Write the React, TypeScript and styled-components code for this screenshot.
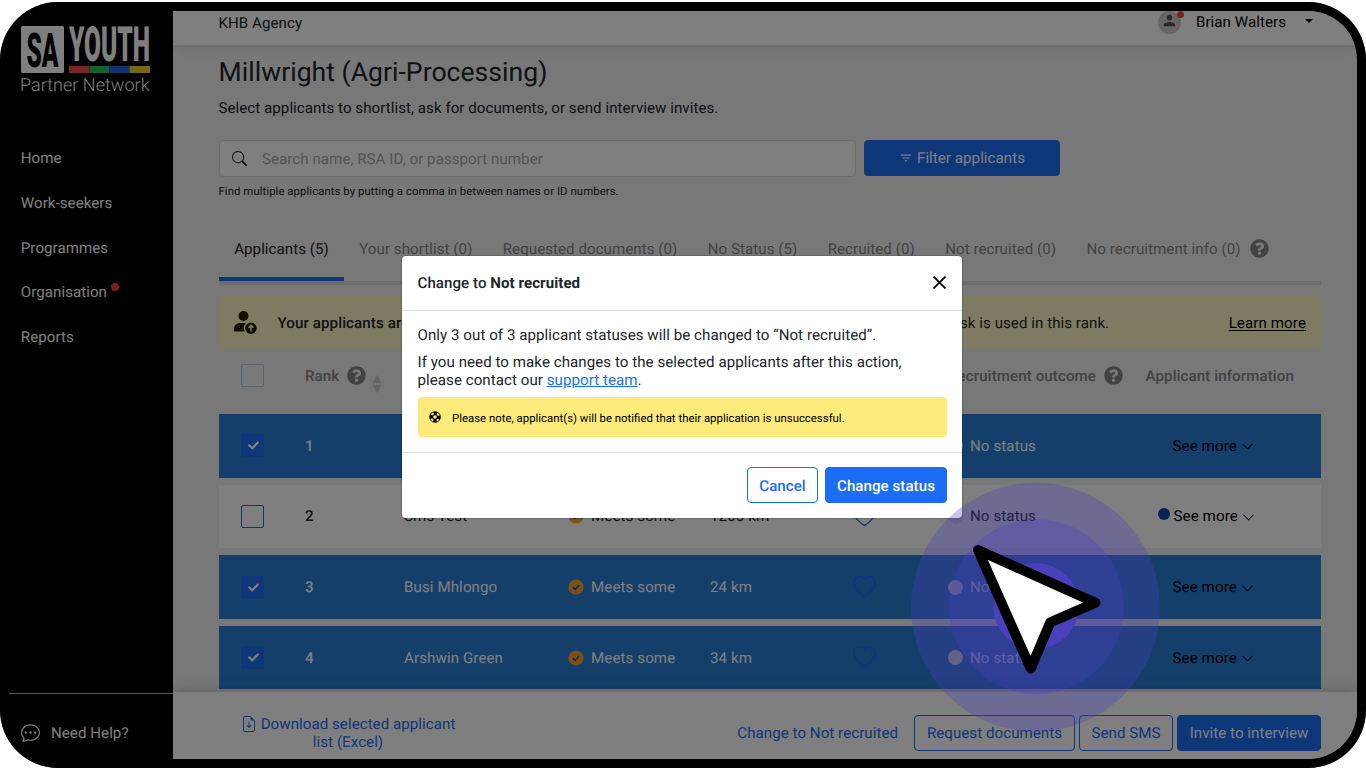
import React from "react";
import styled, { createGlobalStyle, css } from "styled-components";
import {
  BsChatDots,
  BsChevronDown,
  BsFileEarmarkArrowDown,
  BsHeart,
  BsSearch,
} from "react-icons/bs";
import { FaCheck, FaQuestionCircle } from "react-icons/fa";
import { MdFilterList, MdPerson } from "react-icons/md";

const BLUE = "#1b6ef3";

const GlobalStyle = createGlobalStyle`
  * {
    box-sizing: border-box;
  }
  body {
    margin: 0;
    background: #fff;
    overflow: hidden;
    font-family: Roboto, "Liberation Sans", sans-serif;
    font-size: 15.1px;
    letter-spacing: 0.05px;
    text-rendering: geometricPrecision;
    color: #212529;
  }
  p, h1, h2 {
    margin: 0;
  }
  button {
    font: inherit;
    letter-spacing: inherit;
    text-rendering: inherit;
  }
  svg {
    display: block;
    flex: none;
  }
`;

const Device = styled.div`
  position: relative;
  width: 1366px;
  height: 765.5px;
  margin-top: 2px;
  padding: 9px 9px 8.5px 0;
  display: flex;
  background: #000;
  border-radius: 58px;
  overflow: hidden;
`;

/* ---------- sidebar ---------- */

const Sidebar = styled.aside`
  width: 173px;
  flex: none;
  display: flex;
  flex-direction: column;
  padding-top: 13px;
  color: #fff;
`;

const Logo = styled.svg`
  margin-left: 20px;
  overflow: visible;
`;

const Nav = styled.nav`
  display: flex;
  flex-direction: column;
  margin: 40px 0 0 20.8px;
`;

const NavItem = styled.a`
  height: 44.7px;
  display: flex;
  align-items: center;
  color: #fff;
`;

const RedDot = styled.span<{ size: number }>`
  width: ${(p) => p.size}px;
  height: ${(p) => p.size}px;
  border-radius: 50%;
  background: #f4424b;
`;

const NavDot = styled(RedDot)`
  margin: -11px 0 0 4px;
`;

const Help = styled.div`
  margin: auto 0 0 9px;
  height: 66px;
  display: flex;
  align-items: center;
  gap: 11px;
  padding: 13.5px 0 0 12px;
  border-top: 1px solid #b0b0b0;

  svg {
    margin-top: -2px;
  }
`;

/* ---------- page ---------- */

const Page = styled.div`
  flex: 1;
  min-width: 0;
  display: flex;
  flex-direction: column;
  background: #f0f0f0;
  border-radius: 0 49px 49px 0;
  overflow: hidden;
`;

const TopBar = styled.header`
  height: 34px;
  flex: none;
  display: flex;
  align-items: center;
  padding: 0 42px 11px 45.5px;
  background: #fff;
  box-shadow: 0 2px 12px rgba(0, 0, 0, 0.14);
`;

const Account = styled.div`
  margin: -1px 0 0 auto;
  display: flex;
  align-items: center;
  color: #000;
`;

const Avatar = styled.span`
  position: relative;
  width: 23px;
  height: 23px;
  display: flex;
  justify-content: center;
  padding-top: 1px;
  margin-right: 15px;
  border-radius: 50%;
  background: #ccc;
  color: #555;
`;

const AvatarDot = styled(RedDot)`
  position: absolute;
  top: 0;
  right: -3px;
`;

const Caret = styled.span`
  margin: -3px 2px 0 19px;
  border: 4.5px solid transparent;
  border-top-color: #000;
  border-bottom: 0;
`;

const Content = styled.main`
  flex: 1;
  min-height: 0;
  padding: 13px 36px 0 46px;
  overflow: hidden;
`;

const Title = styled.h1`
  margin-left: -0.5px;
  font-size: 26.5px;
  font-weight: 400;
  line-height: 30px;
`;

const Lead = styled.p`
  margin: 11px 0 0 -0.5px;
  line-height: 18px;
`;

const SearchRow = styled.div`
  display: flex;
  gap: 8px;
  margin-top: 23px;
`;

const SearchBox = styled.div`
  width: 637px;
  height: 37px;
  display: flex;
  align-items: center;
  gap: 15.5px;
  padding-left: 11.5px;
  background: #fff;
  border: 1px solid #dcdcdc;
  border-radius: 4px;
`;

const Placeholder = styled.span`
  color: #a8a8a8;
`;

const Button = styled.button<{ width: number; outline?: boolean; bold?: boolean }>`
  width: ${(p) => p.width}px;
  height: 36px;
  display: flex;
  align-items: center;
  justify-content: center;
  gap: 4px;
  padding: 0;
  border: 1px solid ${BLUE};
  border-radius: 4px;
  background: ${(p) => (p.outline ? "transparent" : BLUE)};
  color: ${(p) => (p.outline ? BLUE : "#fff")};
  font-weight: ${(p) => (p.bold ? 500 : 400)};
  white-space: nowrap;
`;

const Hint = styled.p`
  margin: 6px 0 0 -0.5px;
  font-size: 11.4px;
  line-height: 16px;
`;

const Tabs = styled.div`
  display: flex;
  height: 69px;
  margin-top: 17px;
  border-bottom: 4px solid #dadada;
`;

const Tab = styled.div<{ active?: boolean }>`
  display: flex;
  align-items: center;
  gap: 9px;
  padding: 4px 15.2px 0;
  white-space: nowrap;
  color: ${(p) => (p.active ? "#212529" : "#868686")};
  border-bottom: 4px solid ${(p) => (p.active ? BLUE : "transparent")};
`;

const Banner = styled.div`
  height: 53px;
  margin-top: 11px;
  display: flex;
  align-items: center;
  padding: 0 15px;
  background: #fff6c6;
  border-radius: 4px;

  strong {
    margin-left: 20.5px;
    font-weight: 500;
    letter-spacing: 0.1px;
  }
`;

const BannerNote = styled.span`
  margin-left: auto;
  margin-right: 119.5px;
`;

const BannerLink = styled.a`
  color: #000;
  letter-spacing: 0.1px;
  text-decoration: underline;
  text-underline-offset: 2px;
`;

const cells = css`
  display: grid;
  align-items: center;
  padding-left: 22px;
  letter-spacing: 0.1px;
`;

const HeadRow = styled.div`
  ${cells}
  grid-template-columns: 64px 643px 197.5px 1fr;
  height: 65px;
  padding-bottom: 12px;
  color: #848484;
  font-weight: 500;
`;

const HeadCell = styled.div`
  display: flex;
  align-items: center;
  gap: 7.5px;
  white-space: nowrap;
`;

const SortArrows = styled.svg`
  margin: 16px 0 0 -1.5px;
`;

const Row = styled.div<{ selected: boolean }>`
  ${cells}
  grid-template-columns: 64px 99px 163.5px 142.5px 142.5px 95px 210px 1fr;
  height: 63.5px;
  margin-bottom: 7.17px;
  background: ${(p) => (p.selected ? "#2a7ed6" : "#fff")};
  color: ${(p) => (p.selected ? "#fff" : "#212529")};
`;

const Rank = styled.span`
  font-weight: 500;
`;

const Inline = styled.span`
  display: flex;
  align-items: center;
  gap: 7.5px;
`;

const Checkbox = styled.span<{ checked?: boolean; faint?: boolean }>`
  width: 23px;
  height: 23px;
  display: flex;
  align-items: center;
  justify-content: center;
  border: 1px solid ${(p) => (p.faint ? "#b9c6e6" : BLUE)};
  border-radius: 2px;
  background: ${(p) => (p.checked ? BLUE : "transparent")};
  color: #fff;

  svg {
    margin-left: 1px;
  }
`;

const StatusDot = styled.span`
  width: 15px;
  height: 15px;
  border-radius: 50%;
  background: #e0e0e0;
`;

const SeeMore = styled.a`
  display: flex;
  align-items: center;
  padding-left: 15px;
  gap: 4.5px;
  color: #000;

  svg {
    margin-top: 2px;
  }
`;

const NewDot = styled.span`
  width: 12px;
  height: 12px;
  margin: -5px -0.5px 0 -15px;
  border-radius: 50%;
  background: #0d47a8;
`;

const ActionBar = styled.footer`
  position: relative;
  flex: none;
  height: 67.5px;
  display: flex;
  align-items: center;
  gap: 4px;
  padding: 15px 36px 0 67px;
  background: #fff;
  box-shadow: 0 -2px 12px rgba(0, 0, 0, 0.18);
  color: ${BLUE};
`;

const Download = styled.a`
  width: 216px;
  margin-right: auto;
  padding-top: 1px;
  line-height: 18.7px;
  text-align: center;

  svg {
    display: inline-block;
    vertical-align: -3px;
    margin-right: 4px;
  }
`;

const ChangeLink = styled.a`
  margin-right: 12px;
`;

/* ---------- dialog ---------- */

const Backdrop = styled.div`
  position: absolute;
  inset: 0;
  background: rgba(0, 0, 0, 0.5);
`;

const Dialog = styled.section`
  position: absolute;
  left: 402px;
  top: 254px;
  width: 560px;
  height: 262px;
  display: flex;
  flex-direction: column;
  background: #fff;
  border-radius: 4px;
  box-shadow: 0 0 2px rgba(0, 0, 0, 0.5);
`;

const DialogHead = styled.div`
  height: 55px;
  display: flex;
  align-items: center;
  justify-content: space-between;
  padding: 0 16px 1px 15.5px;
  border-bottom: 1px solid #dee2e6;

  h2 {
    font-size: 15.1px;
    font-weight: 500;
  }
  strong {
    font-weight: 700;
  }
`;

const DialogBody = styled.div`
  flex: 1;
  padding: 15px 15px 0 15.5px;
  line-height: 18px;

  p {
    margin-bottom: 9px;
  }
  a {
    color: ${BLUE};
    text-decoration: underline;
  }
`;

const Notice = styled.div`
  height: 40px;
  display: flex;
  align-items: center;
  gap: 10.5px;
  padding: 1px 10px 0;
  margin-top: -1px;
  background: #fcea7a;
  border-radius: 4px;
  color: #000;
  font-size: 11.4px;
  letter-spacing: 0;

  svg {
    margin-top: -2px;
  }
`;

const DialogFoot = styled.div`
  height: 66px;
  display: flex;
  justify-content: flex-end;
  align-items: center;
  gap: 7px;
  padding: 0 15px 1px 0;
  border-top: 1px solid #dee2e6;

  button {
    padding-top: 1px;
  }
`;

const Pointer = styled.svg`
  position: absolute;
  left: 906px;
  top: 476px;
`;

const navItems = ["Home", "Work-seekers", "Programmes", "Organisation", "Reports"];

const tabs = [
  "Applicants (5)",
  "Your shortlist (0)",
  "Requested documents (0)",
  "No Status (5)",
  "Recruited (0)",
  "Not recruited (0)",
  "No recruitment info (0)",
];

const applicants = [
  { name: "Thabo Nkosi", distance: "12 km", selected: true },
  { name: "Sms Test", distance: "1200 km", selected: false, isNew: true },
  { name: "Busi Mhlongo", distance: "24 km", selected: true },
  { name: "Arshwin Green", distance: "34 km", selected: true },
];

const SaYouthLogo = () => (
  <Logo width="132" height="72" viewBox="0 0 132 72">
    <rect x="1" y="2" width="43" height="47" rx="1.5" fill="#fff" />
    <g fontFamily="Roboto, sans-serif" fontWeight="900" letterSpacing="0">
      <text x="6.5" y="42.5" fontSize="48" textLength="32" lengthAdjust="spacingAndGlyphs" fill="#000">
        SA
      </text>
      <text x="49" y="36.5" fontSize="48.5" textLength="81" lengthAdjust="spacingAndGlyphs" fill="#fff">
        YOUTH
      </text>
    </g>
    <rect x="49" y="42" width="20.5" height="7" fill="#f04a4c" />
    <rect x="69.5" y="42" width="20" height="7" fill="#22c465" />
    <rect x="89.5" y="42" width="20" height="7" fill="#2266e8" />
    <rect x="109.5" y="42" width="20.5" height="7" fill="#f0d335" />
    <text
      x="0"
      y="67"
      fontFamily="Roboto, sans-serif"
      fontWeight="300"
      fontSize="18"
      textLength="129.5"
      fill="#fff"
    >
      Partner Network
    </text>
  </Logo>
);

const RankIcon = () => (
  <svg width="23" height="23" viewBox="0 0 23 23">
    <circle cx="9.5" cy="5" r="5" fill="#222000" />
    <path d="M0 20.5V18c0-3.6 3-6 6.5-6h5.5a7 7 0 0 0-1.3 8.5z" fill="#222000" />
    <circle cx="17" cy="17.3" r="5.7" fill="#222000" />
    <path d="M17 20.5v-6M14.5 16.8l2.5-2.5 2.5 2.5" stroke="#fff6c6" strokeWidth="1.5" fill="none" />
  </svg>
);

const MeetsIcon = () => (
  <svg width="16" height="16" viewBox="0 0 16 16">
    <circle cx="8" cy="8" r="7.6" fill="#f6a233" />
    <path d="M4.8 8.2l2.3 2.2 4.1-4.5" stroke="#1f4f8f" strokeWidth="1.5" fill="none" />
  </svg>
);

const SortIcon = () => (
  <SortArrows width="10" height="18" viewBox="0 0 10 18">
    <path d="M5 0l5 8.5H0zM5 18L0 9.5h10z" fill="#cdcdcd" />
  </SortArrows>
);

const LifebuoyIcon = () => (
  <svg width="14" height="14" viewBox="0 0 14 14">
    <circle cx="7" cy="7" r="5.8" fill="#000" />
    <circle
      cx="7"
      cy="7"
      r="4"
      fill="none"
      stroke="#fcea7a"
      strokeWidth="2"
      strokeDasharray="2.9 3.383"
      strokeDashoffset="1.45"
      transform="rotate(45 7 7)"
    />
    <circle cx="7" cy="7" r="1.8" fill="#fcea7a" />
  </svg>
);

const CloseIcon = () => (
  <svg width="13" height="13" viewBox="0 0 13 13">
    <path d="M0.5 0.5l12 12M12.5 0.5l-12 12" stroke="#000" strokeWidth="1.8" />
  </svg>
);

const App = () => {
  return (
    <>
      <GlobalStyle />
      <Device>
        <Sidebar>
          <SaYouthLogo />
          <Nav>
            {navItems.map((item) => (
              <NavItem key={item}>
                {item}
                {item === "Organisation" && <NavDot size={8} />}
              </NavItem>
            ))}
          </Nav>
          <Help>
            <BsChatDots size={19} />
            Need Help?
          </Help>
        </Sidebar>

        <Page>
          <TopBar>
            KHB Agency
            <Account>
              <Avatar>
                <MdPerson size={17} />
                <AvatarDot size={7} />
              </Avatar>
              Brian Walters
              <Caret />
            </Account>
          </TopBar>

          <Content>
            <Title>Millwright (Agri-Processing)</Title>
            <Lead>Select applicants to shortlist, ask for documents, or send interview invites.</Lead>
            <SearchRow>
              <SearchBox>
                <BsSearch size={15} />
                <Placeholder>Search name, RSA ID, or passport number</Placeholder>
              </SearchBox>
              <Button width={196}>
                <MdFilterList size={14} />
                Filter applicants
              </Button>
            </SearchRow>
            <Hint>Find multiple applicants by putting a comma in between names or ID numbers.</Hint>

            <Tabs>
              {tabs.map((tab, i) => (
                <Tab key={tab} active={i === 0}>
                  {tab}
                  {i === tabs.length - 1 && <FaQuestionCircle size={19} />}
                </Tab>
              ))}
            </Tabs>

            <Banner>
              <RankIcon />
              <strong>Your applicants are ranked</strong>
              <BannerNote>No risk is used in this rank.</BannerNote>
              <BannerLink>Learn more</BannerLink>
            </Banner>

            <HeadRow>
              <Checkbox faint />
              <HeadCell>
                Rank <FaQuestionCircle size={19} /> <SortIcon />
              </HeadCell>
              <HeadCell>
                Recruitment outcome <FaQuestionCircle size={19} />
              </HeadCell>
              <HeadCell>Applicant information</HeadCell>
            </HeadRow>

            {applicants.map(({ name, distance, selected, isNew }, i) => (
              <Row key={name} selected={selected}>
                <Checkbox checked={selected}>{selected && <FaCheck size={11} />}</Checkbox>
                <Rank>{i + 1}</Rank>
                <span>{name}</span>
                <Inline>
                  <MeetsIcon />
                  Meets some
                </Inline>
                <span>{distance}</span>
                <BsHeart size={23} color={BLUE} />
                <Inline>
                  <StatusDot />
                  No status
                </Inline>
                <SeeMore>
                  {isNew && <NewDot />}
                  See more
                  <BsChevronDown size={13} />
                </SeeMore>
              </Row>
            ))}
          </Content>

          <ActionBar>
            <Download>
              <BsFileEarmarkArrowDown size={16} />
              Download selected applicant list (Excel)
            </Download>
            <ChangeLink>Change to Not recruited</ChangeLink>
            <Button outline width={161}>
              Request documents
            </Button>
            <Button outline width={94}>
              Send SMS
            </Button>
            <Button width={144}>Invite to interview</Button>
          </ActionBar>
        </Page>

        <Backdrop />

        <Dialog role="dialog">
          <DialogHead>
            <h2>
              Change to <strong>Not recruited</strong>
            </h2>
            <CloseIcon />
          </DialogHead>
          <DialogBody>
            <p>Only 3 out of 3 applicant statuses will be changed to “Not recruited”.</p>
            <p>
              If you need to make changes to the selected applicants after this action,
              <br />
              please contact our <a>support team</a>.
            </p>
            <Notice>
              <LifebuoyIcon />
              Please note, applicant(s) will be notified that their application is unsuccessful.
            </Notice>
          </DialogBody>
          <DialogFoot>
            <Button outline bold width={71}>
              Cancel
            </Button>
            <Button bold width={122}>
              Change status
            </Button>
          </DialogFoot>
        </Dialog>

        <Pointer width="260" height="260" viewBox="906 478 260 260">
          <circle cx="1035.5" cy="607.2" r="124.5" fill="#4840c0" fillOpacity="0.3" />
          <circle cx="1036.5" cy="606.7" r="87.5" fill="#4840c0" fillOpacity="0.3" />
          <circle cx="1036" cy="606" r="43" fill="#4a40ba" />
          <path
            d="M978 550L1095.5 602.7L1050.3 622.3L1030.7 668.5Z"
            fill="#fff"
            stroke="#000"
            strokeWidth="10"
            strokeLinejoin="round"
          />
        </Pointer>
      </Device>
    </>
  );
};

export default App;
